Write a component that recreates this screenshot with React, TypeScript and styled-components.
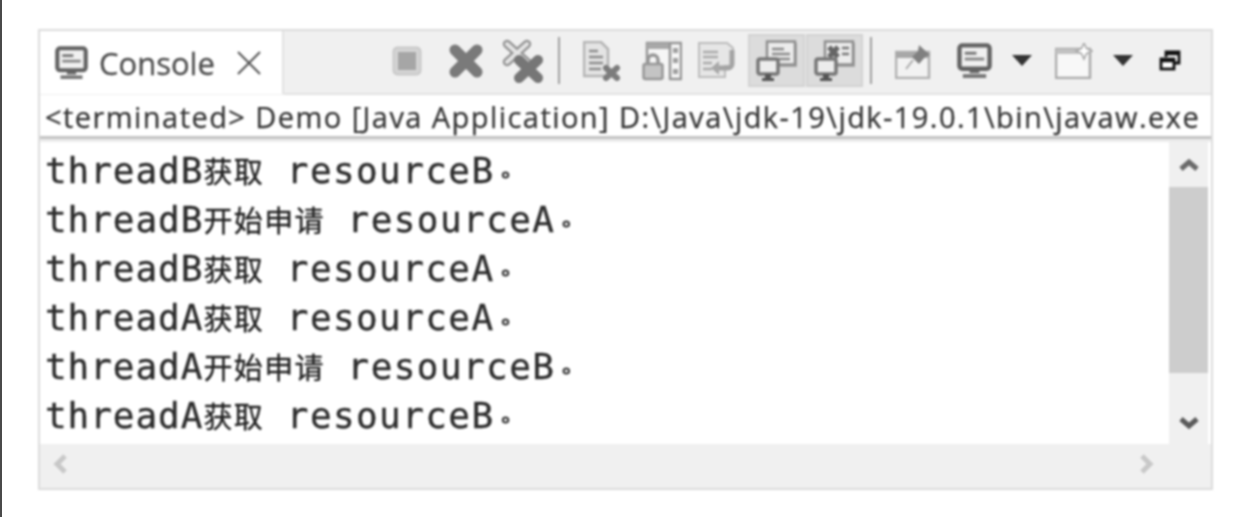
import React from 'react';
import styled, { createGlobalStyle } from 'styled-components';

const GlobalStyle = createGlobalStyle`
  html, body {
    margin: 0;
    padding: 0;
    background: #ffffff;
  }
`;

const Page = styled.div`
  width: 1242px;
  height: 517px;
  box-sizing: border-box;
  padding: 29px 29px 27px 36px;
  border-left: 2px solid #4a4a4a;
  background: #ffffff;
  overflow: hidden;
`;

const Window = styled.div`
  height: 100%;
  box-sizing: border-box;
  display: flex;
  flex-direction: column;
  border: 2px solid #dcdcdc;
  background: #f0f0f0;
  filter: blur(0.8px);
`;

const TabBar = styled.div`
  display: flex;
  height: 64px;
  flex: none;
`;

const Tab = styled.div`
  width: 244px;
  flex: none;
  box-sizing: border-box;
  display: flex;
  align-items: center;
  padding-left: 15px;
  background: #ffffff;
  border-right: 2px solid #e2e2e2;
  margin-bottom: 1px;
`;

const TabLabel = styled.span`
  font-family: 'Open Sans', 'Noto Sans', sans-serif;
  font-size: 31px;
  color: #4c4c4c;
  margin-left: 11px;
  -webkit-text-stroke: 0.3px #4c4c4c;
`;

const TabClose = styled.svg`
  width: 26px;
  height: 26px;
  margin-left: 21px;
`;

const Toolbar = styled.div`
  flex: 1;
  display: flex;
  align-items: stretch;
  padding: 3px 0 6px 94px;
  box-sizing: border-box;
  border-bottom: 2px solid #e2e2e2;
`;

const ToolButton = styled.div<{ $w: number; $on?: boolean }>`
  width: ${p => p.$w}px;
  flex: none;
  box-sizing: border-box;
  display: flex;
  align-items: center;
  justify-content: center;
  background: ${p => (p.$on ? '#dcdcdc' : 'transparent')};
  border: ${p => (p.$on ? '2px solid #d2d2d2' : 'none')};
  margin-right: ${p => (p.$on ? 1 : 0)}px;
`;

const Sep = styled.div<{ $w: number }>`
  width: ${p => p.$w}px;
  flex: none;
  display: flex;
  justify-content: center;
  align-items: center;

  &::before {
    content: '';
    width: 2px;
    height: 47px;
    background: #a0a0a0;
  }
`;

const StatusLine = styled.div`
  height: 44px;
  flex: none;
  box-sizing: border-box;
  background: #ffffff;
  border-bottom: 3px solid #c4c4c4;
  padding-left: 5px;
  font-family: 'Open Sans', 'Noto Sans', sans-serif;
  font-size: 29px;
  letter-spacing: 1.44px;
  line-height: 43px;
  color: #333333;
  -webkit-text-stroke: 0.25px #333333;
  white-space: nowrap;
  overflow: hidden;
`;

const Gap = styled.div`
  height: 3px;
  flex: none;
  background: #ececec;
`;

const Middle = styled.div`
  height: 302px;
  flex: none;
  display: flex;
  background: #ffffff;
`;

const Output = styled.div`
  width: 1129px;
  flex: none;
  box-sizing: border-box;
  padding: 4px 0 0 5px;
`;

const OutputLine = styled.div`
  height: 49px;
  line-height: 49px;
  font-family: 'DejaVu Sans Mono', 'Liberation Mono', monospace;
  font-size: 36px;
  letter-spacing: 0.95px;
  color: #2c2c2c;
  -webkit-text-stroke: 0.35px #2c2c2c;
  white-space: pre;
`;

const Cjk = styled.span`
  font-family: 'Noto Sans CJK SC', sans-serif;
  font-size: 29px;
  letter-spacing: 1.4px;
  color: #222222;
  -webkit-text-stroke: 0.35px #222222;
`;

const Resource = styled.span`
  letter-spacing: 1.4px;
`;

const Stop = styled.span`
  font-family: 'Noto Sans CJK TC', sans-serif;
  font-size: 22px;
  letter-spacing: 0;
  color: #333333;
  -webkit-text-stroke: 0.9px #333333;
`;

const VScroll = styled.div`
  width: 39px;
  flex: none;
  display: flex;
  flex-direction: column;
  align-items: stretch;
  background: #f0f0f0;
`;

const ScrollEnd = styled.div`
  height: 45px;
  flex: none;
  display: flex;
  align-items: center;
  justify-content: center;
  padding-top: 4px;
  box-sizing: border-box;
`;

const Thumb = styled.div`
  height: 186px;
  flex: none;
  background: #cdcdcd;
`;

const VSpacer = styled.div`
  flex: 1;
  display: flex;
  align-items: flex-end;
  justify-content: center;
  padding-bottom: 10px;
`;

const HScroll = styled.div`
  flex: 1;
  display: flex;
  align-items: center;
  justify-content: space-between;
  padding: 0 54px 4px 11px;
  background: #f0f0f0;
`;

const lines: [string, string, string][] = [
  ['threadB', '获取', 'resourceB'],
  ['threadB', '开始申请', 'resourceA'],
  ['threadB', '获取', 'resourceA'],
  ['threadA', '获取', 'resourceA'],
  ['threadA', '开始申请', 'resourceB'],
  ['threadA', '获取', 'resourceB'],
];

const MonitorIcon = ({ size = 33 }: { size?: number }) => (
  <svg width={size} height={size} viewBox="0 0 36 36">
    <rect x="2.5" y="2.5" width="31" height="24" rx="3" fill="#f0f0f0" stroke="#626262" strokeWidth="4.5" />
    <rect x="8" y="9" width="12" height="3" fill="#777" />
    <rect x="8" y="15" width="20" height="3" fill="#888" />
    <path d="M13 28h10v3H13z" fill="#666" />
    <path d="M6 32h24v4H6z" fill="#777" />
  </svg>
);

const StopIcon = () => (
  <svg width="30" height="30" viewBox="0 0 30 30">
    <rect x="1.5" y="1.5" width="27" height="27" rx="4" fill="#d4d4d4" stroke="#c8c8c8" strokeWidth="2" />
    <rect x="6" y="6" width="18" height="18" fill="#a6a6a6" />
  </svg>
);

const CrossIcon = () => (
  <svg width="36" height="36" viewBox="0 0 36 36">
    <path d="M7 7L29 29M29 7L7 29" stroke="#7a7a7a" strokeWidth="11" strokeLinecap="round" />
  </svg>
);

const CrossAllIcon = () => (
  <svg width="42" height="44" viewBox="0 0 42 44">
    <path d="M5 5L25 23M25 5L5 23" stroke="#949494" strokeWidth="8.5" strokeLinecap="round" />
    <path d="M5 5L25 23M25 5L5 23" stroke="#e4e4e4" strokeWidth="4" strokeLinecap="round" />
    <path d="M17 21L36 39M36 21L17 39" stroke="#767676" strokeWidth="10" strokeLinecap="round" />
  </svg>
);

const DocCrossIcon = () => (
  <svg width="38" height="40" viewBox="0 0 38 40">
    <path d="M1 1h17l7 7v27H1z" fill="#e4e4e4" stroke="#b4b4b4" strokeWidth="2.5" />
    <path d="M6 10h9M6 16h14M6 22h14M6 28h12" stroke="#8c8c8c" strokeWidth="2.4" />
    <path d="M23 27L34 37M34 27L23 37" stroke="#7c7c7c" strokeWidth="6" strokeLinecap="round" />
  </svg>
);

const LockIcon = () => (
  <svg width="40" height="40" viewBox="0 0 40 40">
    <path d="M5 24V2h34v36H27" fill="#f6f6f6" stroke="#969696" strokeWidth="2.5" />
    <path d="M5 2h23v6H5z" fill="#a8a8a8" />
    <path d="M28 2v36" stroke="#969696" strokeWidth="2.5" />
    <path d="M31 7h5v5h-5zM31 17h5v5h-5zM31 28h5v5h-5z" fill="#a0a0a0" />
    <rect x="1.5" y="23" width="19" height="15" rx="2" fill="#c4c4c4" stroke="#969696" strokeWidth="2.5" />
    <path d="M6 23v-4a5 5 0 0 1 10 0v4" fill="none" stroke="#969696" strokeWidth="3.5" />
  </svg>
);

const DocArrowIcon = () => (
  <svg width="40" height="38" viewBox="0 0 40 38">
    <path d="M1 1h28l6 5v18h-8v11H1z" fill="#e6e6e6" stroke="#bcbcbc" strokeWidth="2" />
    <path d="M5 10h15M5 15h15M5 21h9M5 27h9" stroke="#aaaaaa" strokeWidth="2.4" />
    <path d="M34 8v14a4 4 0 0 1-4 4h-11" fill="none" stroke="#a4a4a4" strokeWidth="5" />
    <path d="M21 19l-8 7 8 7z" fill="#a8a8a8" />
  </svg>
);

const PinConsoleIcon = ({ cross }: { cross?: boolean }) => (
  <svg width="42" height="42" viewBox="0 0 42 42">
    <rect x="12" y="3" width="29" height="24" fill="#a8a8a8" />
    <rect x="11" y="1.5" width="28" height="23" fill="#ececec" stroke="#8e8e8e" strokeWidth="2.5" />
    {cross ? (
      <>
        <path d="M15 7l9 10M24 7l-9 10" stroke="#666" strokeWidth="5" />
        <path d="M28 8h7M28 14h7" stroke="#777" strokeWidth="2.5" />
      </>
    ) : (
      <path d="M16 9h12M16 14h18M16 19h18" stroke="#8a8a8a" strokeWidth="2.5" />
    )}
    <rect x="2" y="19" width="20" height="15" rx="2" fill="#ececec" stroke="#777" strokeWidth="3.5" />
    <path d="M9 34h6v4H9zM6 38h12v3H6z" fill="#555" />
  </svg>
);

const PinIcon = () => (
  <svg width="38" height="36" viewBox="0 0 38 36">
    <rect x="1" y="9" width="33" height="26" fill="#f2f2f2" stroke="#b0b0b0" strokeWidth="2.5" />
    <rect x="1" y="9" width="33" height="6" fill="#a8a8a8" />
    <path d="M24 2l11 10-5 2-6 7-7-7 6-6z" fill="#808080" />
    <path d="M18 17L11 26" stroke="#aaa" strokeWidth="2" />
  </svg>
);

const NewViewIcon = () => (
  <svg width="38" height="36" viewBox="0 0 38 36">
    <rect x="1" y="6" width="34" height="29" fill="#f8f8f8" stroke="#aaaaaa" strokeWidth="2.5" />
    <rect x="1" y="6" width="34" height="5" fill="#c2c2c2" />
    <path d="M29 0l2.5 5.5L37 8l-5.5 2.5L29 16l-2.5-5.5L21 8l5.5-2.5z" fill="#ffffff" stroke="#a8a8a8" strokeWidth="1.6" />
  </svg>
);

const DropArrow = () => (
  <svg width="20" height="11" viewBox="0 0 20 11">
    <path d="M0 0h20L10 11z" fill="#333333" />
  </svg>
);

const RestoreIcon = () => (
  <svg width="22" height="22" viewBox="0 0 22 22">
    <path d="M7 7V2h13v11h-5" fill="#fff" stroke="#111" strokeWidth="2.8" />
    <rect x="2" y="9" width="13" height="10" fill="#fff" stroke="#111" strokeWidth="2.8" />
    <path d="M2 10.5h13M7 3.5h13" stroke="#111" strokeWidth="3.5" />
  </svg>
);

const Chevron = ({ dir, color }: { dir: 'up' | 'down' | 'left' | 'right'; color: string }) => {
  const d = {
    up: 'M3 13L11 6L19 13',
    down: 'M3 7L11 14L19 7',
    left: 'M14 3L6 11L14 19',
    right: 'M7 3L15 11L7 19',
  }[dir];
  return (
    <svg width="22" height="22" viewBox="0 0 22 22">
      <path d={d} fill="none" stroke={color} strokeWidth="5" />
    </svg>
  );
};

const App: React.FC = () => (
  <Page>
    <GlobalStyle />
    <Window>
      <TabBar>
        <Tab>
          <MonitorIcon />
          <TabLabel>Console</TabLabel>
          <TabClose viewBox="0 0 26 26">
            <path d="M2 2L24 24M24 2L2 24" stroke="#555" strokeWidth="2" />
          </TabClose>
        </Tab>
        <Toolbar>
          <ToolButton $w={58}><StopIcon /></ToolButton>
          <ToolButton $w={60}><CrossIcon /></ToolButton>
          <ToolButton $w={54}><CrossAllIcon /></ToolButton>
          <Sep $w={18} />
          <ToolButton $w={68}><DocCrossIcon /></ToolButton>
          <ToolButton $w={52}><LockIcon /></ToolButton>
          <ToolButton $w={60}><DocArrowIcon /></ToolButton>
          <ToolButton $w={57} $on><PinConsoleIcon /></ToolButton>
          <ToolButton $w={57} $on><PinConsoleIcon cross /></ToolButton>
          <Sep $w={13} />
          <ToolButton $w={74}><PinIcon /></ToolButton>
          <ToolButton $w={46}><MonitorIcon size={35} /></ToolButton>
          <ToolButton $w={50}><DropArrow /></ToolButton>
          <ToolButton $w={54}><NewViewIcon /></ToolButton>
          <ToolButton $w={44}><DropArrow /></ToolButton>
          <ToolButton $w={50}><RestoreIcon /></ToolButton>
        </Toolbar>
      </TabBar>
      <StatusLine>{'<terminated> Demo [Java Application] D:\\Java\\jdk-19\\jdk-19.0.1\\bin\\javaw.exe'}</StatusLine>
      <Gap />
      <Middle>
        <Output>
          {lines.map((l, i) => (
            <OutputLine key={i}>
              {l[0]}
              <Cjk>{l[1]}</Cjk>
              {' '}
              <Resource>{l[2]}</Resource>
              <Stop>。</Stop>
            </OutputLine>
          ))}
        </Output>
        <VScroll>
          <ScrollEnd><Chevron dir="up" color="#6a6a6a" /></ScrollEnd>
          <Thumb />
          <VSpacer><Chevron dir="down" color="#5a5a5a" /></VSpacer>
        </VScroll>
      </Middle>
      <HScroll>
        <Chevron dir="left" color="#c8c8c8" />
        <Chevron dir="right" color="#c8c8c8" />
      </HScroll>
    </Window>
  </Page>
);

export default App;
